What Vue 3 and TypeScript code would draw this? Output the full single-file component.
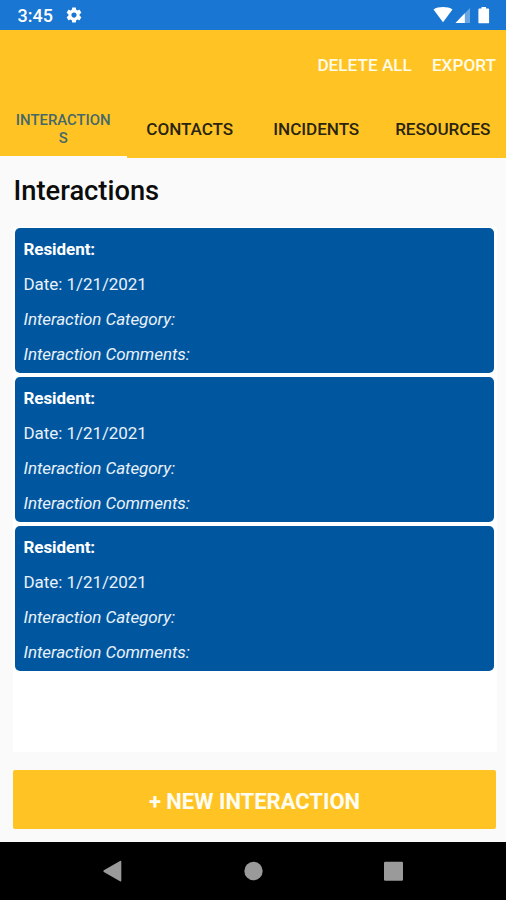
<script setup lang="ts">
interface Interaction {
  id: number
  resident: string
  date: string
  category: string
  comments: string
}

const tabs: string[] = ['CONTACTS', 'INCIDENTS', 'RESOURCES']

const interactions: Interaction[] = [1, 2, 3].map((id) => ({
  id,
  resident: '',
  date: '1/21/2021',
  category: '',
  comments: '',
}))
</script>

<template>
  <div class="screen">
    <div class="status">
      <span class="clock">3:45</span>
      <svg class="gear" width="18" height="18" viewBox="0 0 24 24">
        <path
          fill="#fff"
          d="M19.43 12.98c.04-.32.07-.64.07-.98s-.03-.66-.07-.98l2.11-1.65c.19-.15.24-.42.12-.64l-2-3.46c-.12-.22-.39-.3-.61-.22l-2.49 1c-.52-.4-1.08-.73-1.69-.98l-.38-2.65C14.46 2.18 14.25 2 14 2h-4c-.25 0-.46.18-.49.42l-.38 2.65c-.61.25-1.17.59-1.69.98l-2.49-1c-.23-.09-.49 0-.61.22l-2 3.46c-.13.22-.07.49.12.64l2.11 1.65c-.04.32-.07.65-.07.98s.03.66.07.98l-2.11 1.65c-.19.15-.24.42-.12.64l2 3.46c.12.22.39.3.61.22l2.49-1c.52.4 1.08.73 1.69.98l.38 2.65c.03.24.24.42.49.42h4c.25 0 .46-.18.49-.42l.38-2.65c.61-.25 1.17-.59 1.69-.98l2.49 1c.23.09.49 0 .61-.22l2-3.46c.12-.22.07-.49-.12-.64l-2.11-1.65zM12 15.5c-1.93 0-3.5-1.57-3.5-3.5s1.57-3.5 3.5-3.5 3.5 1.57 3.5 3.5-1.57 3.5-3.5 3.5z"
        />
      </svg>
      <svg class="signals" width="60" height="18" viewBox="0 0 60 18">
        <path fill="#fff" d="M0.5 3.4C3 1.8 6.3 1 10 1s7 .8 9.500 2.400L10 16.200z" />
        <path fill="#fff" fill-opacity=".35" d="M37 2v15H22.500z" />
        <path fill="#fff" d="M31.800 7.300V17H22.500z" />
        <path
          fill="#fff"
          d="M46.300 2.600H48.500V1H53v1.600h2.200q.9 0 .9.900V16.400q0 .9-.9.900H46.300q-.9 0-.9-.9V3.500q0-.9.900-.9z"
        />
      </svg>
    </div>

    <header class="toolbar">
      <span>DELETE ALL</span>
      <span>EXPORT</span>
    </header>

    <nav class="tabs">
      <div class="tab active"><span>INTERACTION<br />S</span></div>
      <div v-for="tab in tabs" :key="tab" class="tab">
        <span>{{ tab }}</span>
      </div>
    </nav>

    <main class="content">
      <h1>Interactions</h1>
      <div class="list">
        <article v-for="item in interactions" :key="item.id" class="card">
          <p class="resident">Resident: {{ item.resident }}</p>
          <p class="date">Date: {{ item.date }}</p>
          <p class="category">Interaction Category: {{ item.category }}</p>
          <p class="comments">Interaction Comments: {{ item.comments }}</p>
        </article>
      </div>
      <button class="add" type="button">+ NEW INTERACTION</button>
    </main>

    <footer class="navbar">
      <svg width="506" height="59" viewBox="0 0 506 59">
        <g fill="#9a9a9a">
          <path d="M103.800 28.300 120 19q1.300-.6 1.300.7V38.500q0 1.300-1.300.7L103.800 29.900q-1-.8 0-1.600z" />
          <circle cx="253.500" cy="29" r="9.200" />
          <rect x="384" y="19.800" width="19" height="19" rx="1.200" />
        </g>
      </svg>
    </footer>
  </div>
</template>

<style>
body {
  margin: 0;
}
</style>

<style scoped>
.screen {
  width: 506px;
  height: 900px;
  display: flex;
  flex-direction: column;
  overflow: hidden;
  background: #fafafa;
  font-family: Roboto, sans-serif;
}
.status {
  flex: none;
  height: 29.5px;
  box-sizing: border-box;
  padding: 0 13px 0 17.5px;
  display: flex;
  align-items: center;
  background: #1976d2;
}
.clock {
  color: #fff;
  font-size: 18px;
  font-weight: 500;
  line-height: 30px;
  padding-top: 2px;
}
.gear {
  margin: 1px 0 0 12px;
}
.signals {
  margin: 1px 0 0 auto;
}
.toolbar {
  flex: none;
  height: 69px;
  box-sizing: border-box;
  padding: 2px 10px 0 0;
  display: flex;
  justify-content: flex-end;
  align-items: center;
  gap: 20px;
  background: #ffc424;
  color: #fffbe8;
  font-size: 17.2px;
  font-weight: 500;
}
.tabs {
  flex: none;
  height: 59px;
  display: grid;
  grid-template-columns: repeat(4, 1fr);
  background: #ffc424;
}
.tab {
  box-sizing: border-box;
  padding: 2px 0 0;
  display: flex;
  align-items: center;
  justify-content: center;
  color: #2a2410;
  font-size: 17.1px;
  font-weight: 500;
  letter-spacing: -0.05px;
  text-align: center;
  border-bottom: 0 solid #fafafa;
}
.tab.active {
  padding-top: 3px;
  color: #47686a;
  font-size: 14.9px;
  letter-spacing: 0;
  line-height: 18px;
  border-bottom-width: 2.500px;
}
.content {
  flex: 1;
  display: flex;
  flex-direction: column;
  padding: 0 10px 0 13px;
}
h1 {
  margin: 16px 0 18px 0.6px;
  font-size: 27.3px;
  line-height: 35px;
  font-weight: 500;
  color: #0c0c0c;
}
.list {
  height: 525px;
  box-sizing: border-box;
  display: flex;
  flex-direction: column;
  gap: 4px;
  padding: 1px 3px 0 2px;
  margin-right: -1px;
  background: #fff;
}
.card {
  height: 145px;
  box-sizing: border-box;
  padding: 3px 8.500px;
  border-radius: 5px;
  background: #01579f;
  color: #e9f1fa;
}
.card p {
  margin: 0;
  height: 35.2px;
  line-height: 36px;
  font-size: 17px;
  letter-spacing: -0.06px;
}
.card .resident {
  color: #fff;
  font-weight: 700;
}
.category,
.comments {
  font-style: italic;
}
.add {
  height: 59px;
  margin: 18.500px 0 0;
  padding: 4px 0 0;
  border: 0;
  border-radius: 2px;
  background: #ffc424;
  color: #fffdf2;
  font: 700 22px Roboto, sans-serif;
}
.navbar {
  flex: none;
  height: 58.500px;
  background: #000;
}
.navbar svg {
  display: block;
}
</style>
